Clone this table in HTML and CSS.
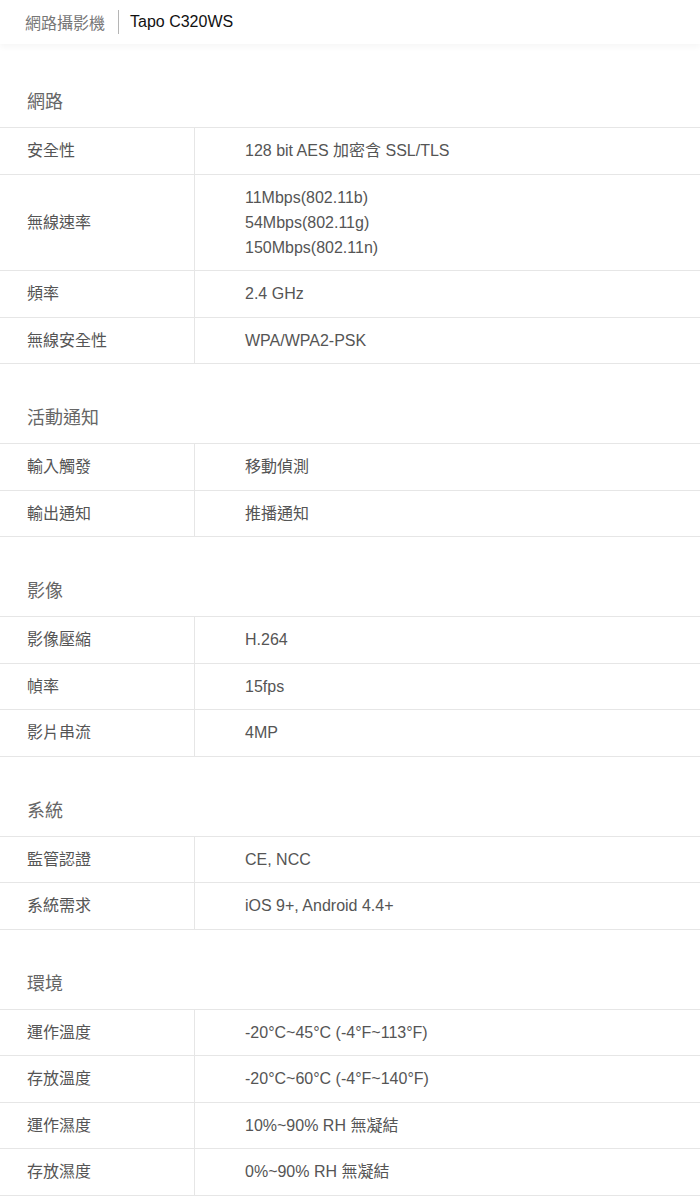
FILE: index.html
```html
<!DOCTYPE html>
<html lang="zh-Hant">
<head>
  <meta charset="UTF-8">
  <meta name="viewport" content="width=device-width, initial-scale=1.0">
  <title>Tapo C320WS 規格</title>
  <link rel="stylesheet" href="styles.css">
</head>
<body>
  <!-- Breadcrumb bar -->
  <div class="topbar">
    <span class="crumb">網路攝影機</span>
    <span class="sep"></span>
    <span class="model">Tapo C320WS</span>
  </div>

  <!-- Network -->
  <h2 class="section-title">網路</h2>
  <div class="spec-table">
    <div class="row"><div class="label">安全性</div><div class="value">128 bit AES 加密含 SSL/TLS</div></div>
    <div class="row"><div class="label">無線速率</div><div class="value">11Mbps(802.11b)<br>54Mbps(802.11g)<br>150Mbps(802.11n)</div></div>
    <div class="row"><div class="label">頻率</div><div class="value">2.4 GHz</div></div>
    <div class="row"><div class="label">無線安全性</div><div class="value">WPA/WPA2-PSK</div></div>
  </div>

  <!-- Notifications -->
  <h2 class="section-title">活動通知</h2>
  <div class="spec-table">
    <div class="row"><div class="label">輸入觸發</div><div class="value">移動偵測</div></div>
    <div class="row"><div class="label">輸出通知</div><div class="value">推播通知</div></div>
  </div>

  <!-- Video -->
  <h2 class="section-title">影像</h2>
  <div class="spec-table">
    <div class="row"><div class="label">影像壓縮</div><div class="value">H.264</div></div>
    <div class="row"><div class="label">幀率</div><div class="value">15fps</div></div>
    <div class="row"><div class="label">影片串流</div><div class="value">4MP</div></div>
  </div>

  <!-- System -->
  <h2 class="section-title">系統</h2>
  <div class="spec-table">
    <div class="row"><div class="label">監管認證</div><div class="value">CE, NCC</div></div>
    <div class="row"><div class="label">系統需求</div><div class="value">iOS 9+, Android 4.4+</div></div>
  </div>

  <!-- Environment -->
  <h2 class="section-title">環境</h2>
  <div class="spec-table">
    <div class="row"><div class="label">運作溫度</div><div class="value">-20°C~45°C (-4°F~113°F)</div></div>
    <div class="row"><div class="label">存放溫度</div><div class="value">-20°C~60°C (-4°F~140°F)</div></div>
    <div class="row"><div class="label">運作濕度</div><div class="value">10%~90% RH 無凝結</div></div>
    <div class="row"><div class="label">存放濕度</div><div class="value">0%~90% RH 無凝結</div></div>
  </div>
</body>
</html>
```

FILE: styles.css
```css
body {
  margin: 0;
  font-family: "Liberation Sans", Arial, "Noto Sans CJK TC", sans-serif;
  color: #4a4a4a;
  background: #fff;
}
.topbar {
  display: flex;
  align-items: center;
  height: 44px;
  padding: 0 0 0 25px;
  box-shadow: 0 3px 6px rgba(0, 0, 0, 0.04);
  font-size: 16px;
  margin-bottom: 44px;
}
.crumb {
  color: #777;
}
.sep {
  width: 1px;
  height: 24px;
  background: #b5b5b5;
  margin: 0 11px 0 13px;
}
.model {
  color: #111;
}
.section-title {
  margin: 39px 0 10px;
  padding-left: 27px;
  font-size: 18px;
  font-weight: normal;
  line-height: 30px;
  color: #666;
}
.topbar + .section-title {
  margin-top: 0;
  line-height: 29px;
}
.spec-table {
  border-top: 1px solid #e6e6e6;
}
.row {
  display: grid;
  grid-template-columns: 195px 1fr;
  border-bottom: 1px solid #e6e6e6;
  font-size: 16px;
  line-height: 25px;
}
.label {
  display: flex;
  align-items: center;
  padding: 10.25px 0 10.25px 27px;
  border-right: 1px solid #e6e6e6;
  color: #555;
}
.value {
  padding: 10.25px 0 10.25px 50px;
  color: #555;
}
```
